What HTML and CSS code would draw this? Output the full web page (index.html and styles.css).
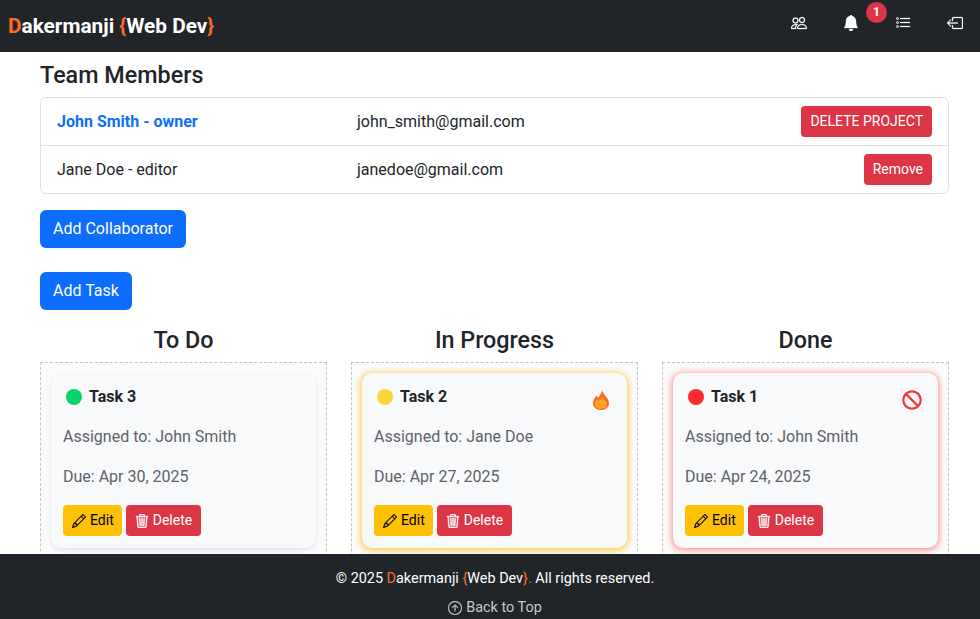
FILE: index.html
```html
<!DOCTYPE html>
<html lang="en">
<head>
<meta charset="utf-8">
<title>Project</title>
<link rel="stylesheet" href="styles.css">
</head>
<body>
<svg class="defs" width="0" height="0" aria-hidden="true">
  <symbol id="i-pencil" viewBox="0 0 16 16"><path d="M12.146.146a.5.5 0 0 1 .708 0l3 3a.5.5 0 0 1 0 .708l-10 10a.5.5 0 0 1-.168.11l-5 2a.5.5 0 0 1-.65-.65l2-5a.5.5 0 0 1 .11-.168zM11.207 2.500 13.500 4.793 14.793 3.500 12.500 1.207zm1.586 3L10.500 3.207 4 9.707V10h.5a.5.5 0 0 1 .5.5v.5h.5a.5.5 0 0 1 .5.5v.5h.293zm-9.761 5.175-.106.106-1.528 3.821 3.821-1.528.106-.106A.5.5 0 0 1 5 12.500V12h-.5a.5.5 0 0 1-.5-.5V11h-.5a.5.5 0 0 1-.468-.325"/></symbol>
  <symbol id="i-trash" viewBox="0 0 16 16"><path d="M6.500 1h3a.5.5 0 0 1 .5.5v1H6v-1a.5.5 0 0 1 .5-.5M11 2.500v-1A1.500 1.500 0 0 0 9.500 0h-3A1.500 1.500 0 0 0 5 1.500v1H1.500a.5.5 0 0 0 0 1h.538l.853 10.660A2 2 0 0 0 4.885 16h6.230a2 2 0 0 0 1.994-1.840l.853-10.660h.538a.5.5 0 0 0 0-1zm1.958 1-.846 10.580a1 1 0 0 1-.997.920h-6.230a1 1 0 0 1-.997-.920L3.042 3.500zm-7.487 1a.5.5 0 0 1 .528.470l.5 8.500a.5.5 0 0 1-.998.060L5 5.030a.5.5 0 0 1 .470-.530Zm5.058 0a.5.5 0 0 1 .470.530l-.5 8.500a.5.5 0 1 1-.998-.060l.5-8.500a.5.5 0 0 1 .528-.470M8 4.500a.5.5 0 0 1 .5.5v8.500a.5.5 0 0 1-1 0V5a.5.5 0 0 1 .5-.5"/></symbol>
</svg>

<nav class="navbar">
  <a class="brand"><span class="accent">D</span>akermanji <span class="accent">{</span>Web Dev<span class="accent">}</span></a>
  <div class="nav-icons">
    <a class="nav-icon"><svg class="nav-svg" viewBox="0 0 16 16" width="16" height="16"><path d="M15 14s1 0 1-1-1-4-5-4-5 3-5 4 1 1 1 1zm-7.978-1L7 12.996c.001-.264.167-1.030.760-1.720C8.312 10.629 9.282 10 11 10c1.717 0 2.687.630 3.240 1.276.593.690.758 1.457.760 1.720l-.008.002-.014.002zM11 7a2 2 0 1 0 0-4 2 2 0 0 0 0 4m3-2a3 3 0 1 1-6 0 3 3 0 0 1 6 0M6.936 9.280a6 6 0 0 0-1.230-.247A7 7 0 0 0 5 9c-4 0-5 3-5 4q0 1 1 1h4.216A2.240 2.240 0 0 1 5 13c0-1.010.377-2.042 1.090-2.904.243-.294.526-.569.846-.816M4.920 10A5.500 5.500 0 0 0 4 13H1c0-.26.164-1.030.760-1.724.545-.636 1.492-1.256 3.160-1.275ZM1.500 5.500a3 3 0 1 1 6 0 3 3 0 0 1-6 0m3-2a2 2 0 1 0 0 4 2 2 0 0 0 0-4"/></svg></a>
    <a class="nav-icon"><svg class="nav-svg" viewBox="0 0 16 16" width="16" height="16"><path d="M8 16a2 2 0 0 0 2-2H6a2 2 0 0 0 2 2m.995-14.901a1 1 0 1 0-1.990 0A5 5 0 0 0 3 6c0 1.098-.5 6-2 7h14c-1.500-1-2-5.902-2-7 0-2.420-1.720-4.440-4.005-4.901"/></svg><span class="badge">1</span></a>
    <a class="nav-icon"><svg class="nav-svg" viewBox="0 0 16 16" width="16" height="16"><path fill-rule="evenodd" d="M2 2.500a.5.5 0 0 0-.5.5v1a.5.5 0 0 0 .5.5h1a.5.5 0 0 0 .5-.5V3a.5.5 0 0 0-.5-.5zM3 3H2v1h1z"/><path d="M5 3.500a.5.5 0 0 1 .5-.5h9a.5.5 0 0 1 0 1h-9a.5.5 0 0 1-.5-.5M5.500 7a.5.5 0 0 0 0 1h9a.5.5 0 0 0 0-1zm0 4a.5.5 0 0 0 0 1h9a.5.5 0 0 0 0-1z"/><path fill-rule="evenodd" d="M1.500 7a.5.5 0 0 1 .5-.5h1a.5.5 0 0 1 .5.5v1a.5.5 0 0 1-.5.5H2a.5.5 0 0 1-.5-.5zM2 7h1v1H2zm0 3.500a.5.5 0 0 0-.5.5v1a.5.5 0 0 0 .5.5h1a.5.5 0 0 0 .5-.5v-1a.5.5 0 0 0-.5-.5zm1 .5H2v1h1z"/></svg></a>
    <a class="nav-icon"><svg class="nav-svg" viewBox="0 0 16 16" width="16" height="16"><path fill-rule="evenodd" d="M6 12.500a.5.5 0 0 0 .5.5h8a.5.5 0 0 0 .5-.5v-9a.5.5 0 0 0-.5-.5h-8a.5.5 0 0 0-.5.5v2a.5.5 0 0 1-1 0v-2A1.500 1.500 0 0 1 6.500 2h8A1.500 1.500 0 0 1 16 3.500v9a1.500 1.500 0 0 1-1.500 1.500h-8A1.500 1.500 0 0 1 5 12.500v-2a.5.5 0 0 1 1 0z"/><path fill-rule="evenodd" d="M.146 8.354a.5.5 0 0 1 0-.708l3-3a.5.5 0 1 1 .708.708L1.707 7.500H10.500a.5.5 0 0 1 0 1H1.707l2.147 2.146a.5.5 0 0 1-.708.708z"/></svg></a>
  </div>
</nav>

<main class="content">
  <h2 class="section-title">Team Members</h2>
  <ul class="members">
    <li class="member">
      <span class="member-name owner">John Smith - owner</span>
      <span class="member-email">john_smith@gmail.com</span>
      <button class="btn btn-danger btn-sm upper">Delete Project</button>
    </li>
    <li class="member">
      <span class="member-name">Jane Doe - editor</span>
      <span class="member-email">janedoe@gmail.com</span>
      <button class="btn btn-danger btn-sm">Remove</button>
    </li>
  </ul>
  <div class="action"><button class="btn btn-primary">Add Collaborator</button></div>
  <div class="action"><button class="btn btn-primary">Add Task</button></div>

  <div class="board">
    <section class="column">
      <h3 class="column-title">To Do</h3>
      <div class="dropzone">
        <article class="task">
          <header class="task-head"><span class="dot dot-green"></span><span class="task-name">Task 3</span></header>
          <p class="task-line">Assigned to: John Smith</p>
          <p class="task-line">Due: Apr 30, 2025</p>
          <div class="task-actions">
            <button class="btn btn-warning btn-task"><svg class="btn-icon"><use href="#i-pencil"/></svg>Edit</button>
            <button class="btn btn-danger btn-task"><svg class="btn-icon icon-bold"><use href="#i-trash"/></svg>Delete</button>
          </div>
        </article>
      </div>
    </section>
    <section class="column">
      <h3 class="column-title">In Progress</h3>
      <div class="dropzone">
        <article class="task task-warn">
          <header class="task-head"><span class="dot dot-yellow"></span><span class="task-name">Task 2</span>
            <svg class="task-flag flame" viewBox="0 0 16 20" width="16" height="20"><path fill="#ff6a1f" d="M9 0C9.500 3 12 5 14 8C15.300 10 16 11.500 16 13.500C16 17.500 12.500 20 8 20C3.500 20 0 17.500 0 13.500C0 10 1.500 8 3.500 5.500C4 6.500 4.500 7.200 5.200 7.800C6.500 5.500 9 3.500 9 0Z"/><path fill="#ffa42b" d="M8.500 6.500C9.200 9 14 10.500 14 14.300C14 17.300 11 18.800 8 18.800C5 18.800 2 17.300 2 14.300C2 12 3 10.500 4.500 9.300C5 10.300 5.500 10.800 6 11C7 10 8.500 8.500 8.500 6.500Z"/></svg>
          </header>
          <p class="task-line">Assigned to: Jane Doe</p>
          <p class="task-line">Due: Apr 27, 2025</p>
          <div class="task-actions">
            <button class="btn btn-warning btn-task"><svg class="btn-icon"><use href="#i-pencil"/></svg>Edit</button>
            <button class="btn btn-danger btn-task"><svg class="btn-icon icon-bold"><use href="#i-trash"/></svg>Delete</button>
          </div>
        </article>
      </div>
    </section>
    <section class="column">
      <h3 class="column-title">Done</h3>
      <div class="dropzone">
        <article class="task task-late">
          <header class="task-head"><span class="dot dot-red"></span><span class="task-name">Task 1</span>
            <svg class="task-flag ban" viewBox="0 0 20 20" width="20" height="20" fill="none" stroke="#f8333c" stroke-width="2.200"><circle cx="10" cy="10" r="8.700"/><path d="M3.900 3.900l12.200 12.200"/></svg>
          </header>
          <p class="task-line">Assigned to: John Smith</p>
          <p class="task-line">Due: Apr 24, 2025</p>
          <div class="task-actions">
            <button class="btn btn-warning btn-task"><svg class="btn-icon"><use href="#i-pencil"/></svg>Edit</button>
            <button class="btn btn-danger btn-task"><svg class="btn-icon icon-bold"><use href="#i-trash"/></svg>Delete</button>
          </div>
        </article>
      </div>
    </section>
  </div>
</main>

<footer class="footer">
  <p class="copyright">© 2025 <span class="accent">D</span>akermanji <span class="accent">{</span>Web Dev<span class="accent">}.</span> All rights reserved.</p>
  <a class="to-top"><svg class="top-icon" viewBox="0 0 16 16" width="14" height="14"><path fill-rule="evenodd" d="M1 8a7 7 0 1 0 14 0A7 7 0 0 0 1 8m15 0A8 8 0 1 1 0 8a8 8 0 0 1 16 0m-7.500 3.500a.5.5 0 0 1-1 0V5.707L5.354 7.854a.5.5 0 1 1-.708-.708l3-3a.5.5 0 0 1 .708 0l3 3a.5.5 0 0 1-.708.708L8.500 5.707z"/></svg>Back to Top</a>
</footer>
</body>
</html>
```
FILE: styles.css
```css
* { box-sizing: border-box; }
html, body { height: 100%; }
body {
  margin: 0;
  overflow: hidden;
  font-family: Roboto, "Liberation Sans", sans-serif;
  font-size: 16px;
  line-height: 1.5;
  color: #212529;
  background: #fff;
}
.defs { position: absolute; }
.accent { color: #fd6b20; }

.navbar {
  height: 52px;
  background: #212529;
  display: flex;
  align-items: center;
  justify-content: space-between;
  padding-left: 8px;
}
.brand { font-size: 20.8px; font-weight: 700; color: #fff; line-height: 30px; }
.nav-icons { display: flex; margin-right: -1px; margin-top: -6px; }
.nav-icon { position: relative; width: 52px; height: 16px; display: flex; justify-content: center; color: #fff; }
.nav-svg { fill: currentColor; stroke: currentColor; stroke-width: 0.25; }
.badge {
  position: absolute;
  left: 41px;
  top: -13px;
  width: 21px;
  height: 21px;
  border-radius: 50%;
  background: #dc3545;
  color: #fff;
  font-size: 12px;
  font-weight: 700;
  line-height: 21px;
  text-align: center;
}

.content { padding: 8px 31px 0 40px; }
.section-title { margin: 0 0 7px; font-size: 23.34px; font-weight: 500; line-height: 30px; }
.members {
  list-style: none;
  margin: 0 0 16px;
  padding: 0;
  border: 1px solid #dee2e6;
  border-radius: 6px;
}
.member { height: 47px; padding: 0 16px; display: flex; align-items: center; }
.member + .member { border-top: 1px solid #dee2e6; height: 48px; }
.member-name { width: 300px; }
.member-name.owner { color: #0d6efd; font-weight: 700; }
.member-email { flex: 1; }

.btn {
  display: inline-flex;
  align-items: center;
  border: 1px solid transparent;
  border-radius: 6px;
  font-family: inherit;
  font-size: 16px;
  line-height: 24px;
  padding: 6px 12px;
}
.btn-primary { background: #0d6efd; color: #fff; }
.btn-danger { background: #dc3545; color: #fff; }
.btn-warning { background: #ffc107; color: #000; }
.btn-sm { font-size: 14px; line-height: 21px; padding: 4px 8px; border-radius: 4px; }
.upper { text-transform: uppercase; }
.action { margin-bottom: 24px; }

.board { display: grid; grid-template-columns: repeat(3, 1fr); gap: 24px; margin-top: -8px; }
.column-title { margin: 0 0 7px; font-size: 23.34px; font-weight: 500; line-height: 29px; text-align: center; }
.dropzone {
  border: 1px dashed #c4c4c4;
  background: #fbfbfb;
  padding: 10px;
  height: 260px;
}
.task {
  background: #f8f9fa;
  border-radius: 10px;
  padding: 12px;
  box-shadow: 0 2px 5px rgba(0, 0, 0, 0.1);
}
.task-warn { box-shadow: 0 1px 6px 1px rgba(255, 180, 0, 0.8); }
.task-late { box-shadow: 0 1px 6px 1px rgba(255, 45, 45, 0.55); }
.task-head { position: relative; display: flex; align-items: center; height: 24px; margin-bottom: 16px; }
.dot { width: 16px; height: 16px; border-radius: 50%; margin: 0 7px 0 3px; }
.dot-green { background: #06d36c; }
.dot-yellow { background: #ffd43b; }
.dot-red { background: #fb2d30; }
.task-name { font-weight: 700; }
.task-flag { position: absolute; }
.flame { right: 6px; top: 5px; }
.ban { right: 4px; top: 5px; }
.task-line { margin: 0 0 16px; color: #5c636a; }
.task-actions { display: flex; gap: 4px; }
.btn-task { font-size: 14px; line-height: 21px; padding: 4px 8px; height: 31px; border-radius: 4px; }
.btn-task.btn-warning { padding-right: 7px; }
.btn-icon { width: 14px; height: 14px; fill: currentColor; stroke: currentColor; stroke-width: 0.3; margin-right: 4px; }
.icon-bold { stroke-width: 0.6; }

.footer {
  position: fixed;
  left: 0;
  right: 0;
  bottom: 0;
  height: 65px;
  background: #212529;
  color: #fff;
  text-align: center;
  font-size: 14.4px;
  padding: 14px 0 0 10px;
}
.copyright { margin: 0 0 8px; line-height: 21px; }
.to-top { display: flex; justify-content: center; align-items: center; gap: 4px; color: #c5c8cb; line-height: 21px; }
.top-icon { fill: currentColor; stroke: currentColor; stroke-width: 0.3; }
```
